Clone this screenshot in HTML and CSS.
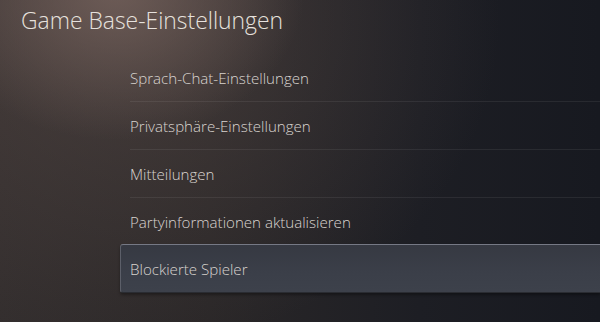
FILE: index.html
```html
<!DOCTYPE html>
<html lang="de">
<head>
    <meta charset="UTF-8">
    <meta name="viewport" content="width=device-width, initial-scale=1.0">
    <title>Game Base-Einstellungen</title>
    <link rel="stylesheet" href="styles.css">
</head>
<body>
    <div class="screen">
        <h1 class="title">Game Base-Einstellungen</h1>

        <ul class="menu">
            <li class="menu-item">Sprach-Chat-Einstellungen</li>
            <li class="menu-item">Privatsphäre-Einstellungen</li>
            <li class="menu-item">Mitteilungen</li>
            <li class="menu-item">Partyinformationen aktualisieren</li>
            <li class="menu-item selected">Blockierte Spieler</li>
        </ul>
    </div>
</body>
</html>
```

FILE: styles.css
```css
:root {
    --text-color: #d8d3cf;
    --title-color: #e6e1dd;
    --line-color: rgba(255, 255, 255, 0.07);
}

* {
    margin: 0;
    padding: 0;
    box-sizing: border-box;
    font-family: 'Open Sans', 'Noto Sans', sans-serif;
}

html, body {
    height: 100%;
}

body {
    overflow: hidden;
    background:
        radial-gradient(ellipse 190px 150px at 115px -10px, rgba(122, 102, 96, 0.75), rgba(122, 102, 96, 0) 100%),
        radial-gradient(ellipse 380px 330px at 120px 20px, rgba(90, 76, 72, 0.55), rgba(90, 76, 72, 0) 100%),
        linear-gradient(90deg, #332e2e 0%, #2a2728 35%, #1d1e24 70%, #171920 100%);
}

.screen {
    height: 100%;
}

.title {
    font-size: 22.9px;
    font-weight: 300;
    line-height: 32px;
    color: var(--title-color);
    padding: 5px 0 0 21px;
    height: 54px;
}

.menu {
    list-style: none;
    margin-left: 130px;
}

.menu-item {
    height: 48px;
    display: flex;
    align-items: center;
    font-size: 15.1px;
    font-weight: 300;
    color: var(--text-color);
    border-bottom: 1px solid var(--line-color);
}

.menu-item.selected {
    margin: -2px 0 0 -10px;
    height: 49px;
    padding-left: 9px;
    border: 1px solid #5c5f69;
    border-top-color: #767985;
    border-bottom-color: #2a2c32;
    border-right: none;
    border-radius: 3px 0 0 3px;
    background: linear-gradient(180deg, #363942 0%, #3b3f49 60%, #3d414b 100%);
    box-shadow: 0 2px 3px rgba(0, 0, 0, 0.35);
}
```
